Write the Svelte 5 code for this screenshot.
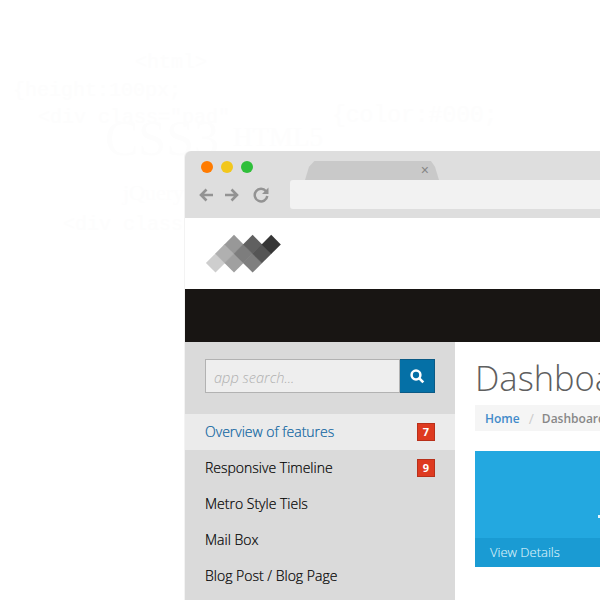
<script>
	const dots = ['#ff7b00', '#f2c71c', '#2fbf3a']
	const tiles = [
		[215.5, 263, '#cecece'],
		[224.7, 253.7, '#b0b0b0'],
		[234, 244.4, '#989898'],
		[234, 263, '#a0a0a0'],
		[243.3, 253.7, '#7d7d7d'],
		[252.6, 244.4, '#606060'],
		[252.6, 263, '#7f7f7f'],
		[261.9, 253.7, '#555555'],
		[271.2, 244.4, '#363636']
	]
	const menu = [
		{ label: 'Overview of features', badge: 7, active: true },
		{ label: 'Responsive Timeline', badge: 9 },
		{ label: 'Metro Style Tiels' },
		{ label: 'Mail Box' },
		{ label: 'Blog Post / Blog Page' }
	]
	const diamond = (x, y) => {
		const ox = x - 200
		const oy = y - 230
		const r = 9.6
		return `${ox - r},${oy} ${ox},${oy - r} ${ox + r},${oy} ${ox},${oy + r}`
	}
</script>

<div class="page">
	<!-- faint code lettering behind the browser -->
	<div class="ghost g-html">&lt;html&gt;</div>
	<div class="ghost g-height">{'{height:100px;'}</div>
	<div class="ghost g-cls">&lt;div class="pad"</div>
	<div class="ghost g-rule">{'{color:#000;'}</div>
	<div class="ghost g-css">CSS3</div>
	<div class="ghost g-h5">HTML5</div>
	<div class="ghost g-jq">jQuery</div>
	<div class="ghost g-div">&lt;div class</div>

	<div class="window">
		<div class="chrome">
			<div class="dots">
				{#each dots as d}
					<span class="dot" style="background:{d}"></span>
				{/each}
			</div>
			<div class="tab"><span class="close">×</span></div>
			<div class="toolbar">
				<div class="navs">
					<svg width="16" height="16" viewBox="0 0 16 16" fill="none" stroke="#939393" stroke-width="2.6">
						<path d="M15 8H3M8.5 2.5 3 8l5.500 5.500" />
					</svg>
					<svg width="16" height="16" viewBox="0 0 16 16" fill="none" stroke="#939393" stroke-width="2.6">
						<path d="M1 8h12M7.500 2.500 13 8l-5.500 5.500" />
					</svg>
					<svg class="reload" width="16" height="16" viewBox="0 0 16 16" fill="none">
						<path d="M13 4.200A6.300 6.300 0 1 0 14.300 9" stroke="#939393" stroke-width="2.500" />
						<path d="M15.500 .5v6.500H9z" fill="#939393" />
					</svg>
				</div>
				<div class="address"></div>
			</div>
		</div>

		<header class="brand">
			<svg width="84" height="50" viewBox="0 0 84 50">
				{#each tiles as [x, y, c]}
					<polygon points={diamond(x, y)} fill={c} />
				{/each}
			</svg>
		</header>
		<div class="navbar"></div>

		<div class="body">
			<aside class="sidebar">
				<form class="search">
					<div class="input">app search...</div>
					<div class="go">
						<svg width="16" height="16" viewBox="0 0 16 16" fill="none" stroke="#fff">
							<circle cx="7" cy="7" r="4.400" stroke-width="2.500" />
							<path d="m10.300 10.300 4 4" stroke-width="2.600" />
						</svg>
					</div>
				</form>
				<ul>
					{#each menu as item}
						<li class:active={item.active}>
							<span>{item.label}</span>
							{#if item.badge}<b class="badge">{item.badge}</b>{/if}
						</li>
					{/each}
				</ul>
			</aside>

			<main class="content">
				<h1>Dashboard</h1>
				<nav class="crumbs">
					<a href="#home">Home</a>
					<i>/</i>
					<span>Dashboard</span>
				</nav>
				<section class="card">
					<div class="card-top"><span class="tick"></span></div>
					<div class="card-foot">View Details</div>
				</section>
			</main>
		</div>
	</div>
</div>

<style>
	:global(body) {
		margin: 0;
		background: #fff;
	}

	.page {
		position: relative;
		width: 600px;
		height: 600px;
		overflow: hidden;
		background: #fff;
		font-family: 'Open Sans', sans-serif;
	}

	.ghost {
		position: absolute;
		color: #fdfdfd;
		white-space: nowrap;
		font-family: 'Liberation Serif', serif;
		line-height: 1;
	}

	.g-html {
		left: 135px;
		top: 53px;
		font-size: 20px;
		font-family: 'Liberation Mono', monospace;
	}

	.g-height {
		left: 13px;
		top: 81px;
		font-size: 20px;
		font-family: 'Liberation Mono', monospace;
	}

	.g-cls {
		left: 38px;
		top: 108px;
		font-size: 20px;
		font-family: 'Liberation Mono', monospace;
	}

	.g-rule {
		left: 332px;
		top: 105px;
		font-size: 23px;
		font-family: 'Liberation Mono', monospace;
	}

	.g-css {
		left: 105px;
		top: 113px;
		font-size: 50px;
	}

	.g-h5 {
		left: 233px;
		top: 124px;
		font-size: 27px;
	}

	.g-jq {
		left: 123px;
		top: 182px;
		font-size: 22px;
	}

	.g-div {
		left: 63px;
		top: 215px;
		font-size: 20px;
		font-family: 'Liberation Mono', monospace;
	}

	.window {
		position: absolute;
		left: 185px;
		top: 151px;
		width: 415px;
		height: 449px;
		border-radius: 6px 0 0 0;
		background: #fff;
		box-shadow: -1px 0 0 #f3f3f3;
		overflow: hidden;
	}

	.chrome {
		height: 67px;
		background: #dedede;
		position: relative;
	}

	.dots {
		display: flex;
		gap: 8px;
		padding: 10px 0 0 16px;
	}

	.dot {
		width: 12px;
		height: 12px;
		border-radius: 50%;
	}

	.tab {
		position: absolute;
		left: 120px;
		top: 10px;
		width: 134px;
		height: 19px;
		background: #c9c9c9;
		clip-path: polygon(0 100%, 3% 30%, 7% 0, 94% 0, 97% 30%, 100% 100%);
	}

	.close {
		position: absolute;
		right: 10px;
		top: 0;
		font: 14px/19px 'Liberation Sans', sans-serif;
		color: #858585;
	}

	.toolbar {
		display: flex;
		align-items: center;
		margin-top: 7px;
		padding-left: 13px;
	}

	.navs {
		display: flex;
		align-items: center;
		gap: 10px;
		width: 92px;
		flex: none;
	}

	.reload {
		margin-left: 3px;
	}

	.address {
		flex: 1;
		height: 29px;
		background: #f2f2f2;
		border-radius: 3px 0 0 3px;
	}

	.brand {
		height: 71px;
		padding: 12px 0 0 15px;
		box-sizing: border-box;
	}

	.brand svg {
		display: block;
	}

	.navbar {
		height: 53px;
		background: #181513;
	}

	.body {
		display: flex;
		height: 258px;
	}

	.sidebar {
		width: 270px;
		flex: none;
		background: #dadada;
		padding-top: 17px;
		box-sizing: border-box;
	}

	.search {
		display: flex;
		height: 34px;
		margin: 0 20px 21px;
		box-sizing: border-box;
	}

	.input {
		flex: 1;
		border: 1px solid #b2b2b2;
		background: #eee;
		color: #b0b0b0;
		font-size: 14.600px;
		font-weight: 300;
		font-style: italic;
		line-height: 34px;
		height: 32px;
		padding-left: 8px;
	}

	.go {
		width: 35px;
		background: #0570a6;
		border: 1px solid #0b5a85;
		border-left: 0;
		box-sizing: border-box;
		display: grid;
		place-items: center;
	}

	ul {
		list-style: none;
		margin: 0;
		padding: 0;
	}

	li {
		height: 36px;
		display: flex;
		align-items: center;
		justify-content: space-between;
		padding: 0 20px;
		font-size: 14px;
		font-weight: 300;
		color: #000;
	}

	li span {
		margin-top: -2px;
		-webkit-text-stroke: 0.2px currentColor;
	}

	li.active {
		background: #ebebeb;
		color: #0a62a0;
	}

	.badge {
		width: 18px;
		height: 18px;
		box-sizing: border-box;
		background: #de3a20;
		border: 1px solid #b8301a;
		color: #fff;
		font-size: 11px;
		font-weight: 700;
		line-height: 16px;
		text-align: center;
	}

	.content {
		flex: 1;
		padding: 9px 0 0 20px;
		min-width: 0;
		overflow: hidden;
	}

	h1 {
		margin: 0;
		font-size: 34.500px;
		font-weight: 300;
		line-height: 54px;
		color: #5f5f5f;
		white-space: nowrap;
	}

	.crumbs {
		height: 26px;
		background: #f5f5f5;
		padding-left: 10px;
		display: flex;
		align-items: center;
		font-size: 12px;
		font-weight: 600;
		white-space: nowrap;
	}

	.crumbs a {
		color: #428bca;
		text-decoration: none;
	}

	.crumbs i {
		font-style: normal;
		font-weight: 400;
		color: #ccc;
		margin: 0 8px 0 9px;
		font-size: 14px;
	}

	.crumbs span {
		color: #888;
	}

	.card {
		margin-top: 20px;
		height: 116px;
		background: #23a8e0;
		display: flex;
		flex-direction: column;
		position: relative;
	}

	.card-top {
		flex: 1;
	}

	.tick {
		position: absolute;
		left: 123px;
		top: 64px;
		width: 2px;
		height: 3px;
		background: #e6f5fc;
	}

	.card-foot {
		height: 29px;
		background: #1a9bd3;
		color: #d8eff9;
		font-size: 13px;
		font-weight: 300;
		line-height: 29px;
		padding-left: 15px;
		-webkit-text-stroke: 0.15px currentColor;
	}
</style>
